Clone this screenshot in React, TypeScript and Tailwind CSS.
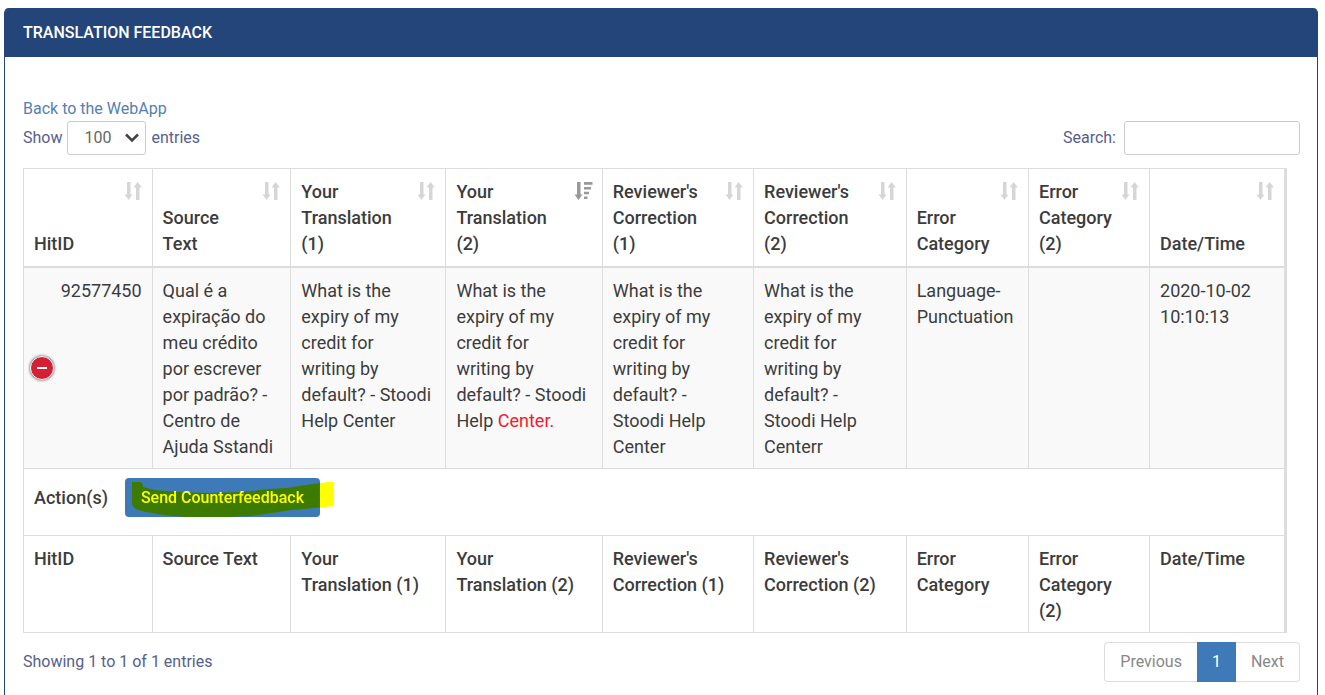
import { useState } from "react";

type SortState = "none" | "desc";

interface Column {
  head: string;
  foot: string;
  width: string;
  sort: SortState;
}

const columns: Column[] = [
  { head: "HitID", foot: "HitID", width: "w-[10.2%]", sort: "none" },
  { head: "Source\nText", foot: "Source Text", width: "w-[11%]", sort: "none" },
  { head: "Your\nTranslation\n(1)", foot: "Your\nTranslation (1)", width: "w-[12.3%]", sort: "none" },
  { head: "Your\nTranslation\n(2)", foot: "Your\nTranslation (2)", width: "w-[12.4%]", sort: "desc" },
  { head: "Reviewer's\nCorrection\n(1)", foot: "Reviewer's\nCorrection (1)", width: "w-[12%]", sort: "none" },
  { head: "Reviewer's\nCorrection\n(2)", foot: "Reviewer's\nCorrection (2)", width: "w-[12.1%]", sort: "none" },
  { head: "Error\nCategory", foot: "Error\nCategory", width: "w-[9.7%]", sort: "none" },
  { head: "Error\nCategory\n(2)", foot: "Error\nCategory\n(2)", width: "w-[9.6%]", sort: "none" },
  { head: "Date/Time", foot: "Date/Time", width: "w-[10.7%]", sort: "none" },
];

const cell = "border-r border-b border-[#ddd] px-[10px] whitespace-pre-line";
const dataCell = cell + " pt-[10px] pb-2";

function SortIcon({ state }: { state: SortState }) {
  if (state === "desc") {
    return (
      <svg width="20" height="20" viewBox="0 0 20 20" fill="#999" aria-hidden="true">
        <path d="M4 1h3.500v12.500h2L5.500 19l-4-5.500H4z" />
        <path d="M11 1h8.500v2.800H11zM11 6h7v2.500h-7zM11 10.800h5v2.500h-5zM11 15.500h3.500V18H11z" />
      </svg>
    );
  }
  return (
    <svg width="20" height="20" viewBox="0 0 20 20" fill="#d6d6d6" aria-hidden="true">
      <path d="M4 1h3.500v12.500h2L5.500 19l-4-5.500H4zM13 19V6.500h-2.500L14.500 1 19 6.500h-2.500V19z" />
    </svg>
  );
}

function Highlight() {
  return (
    <svg
      className="pointer-events-none absolute top-1 left-[7px] mix-blend-multiply"
      width="203"
      height="36"
      viewBox="0 0 203 36"
      aria-hidden="true"
    >
      <path
        d="M0 0h8q3 1 3 5l12 3 24 2 30 1 35-1 24-3 18-1 20-3 22-3h6v24l-8 1-12 1-22 2-20 3-22 3-22 1H54l-22-2-18-3-8-2q-6-2-6-7z"
        fill="#ff0"
      />
    </svg>
  );
}

export default function App() {
  const [open, setOpen] = useState(true);
  return (
    <main className="flex min-h-screen flex-col bg-white pt-2 pr-[7px] pl-1 font-['Roboto',sans-serif] text-base text-[#57608c]">
      <section className="flex-1 rounded-t-[5px] border-x border-[#24457a]">
        <header className="flex h-[49px] items-center rounded-t-[4px] bg-[#24457a] px-[18px]">
          <h1 className="text-base font-medium text-white">TRANSLATION FEEDBACK</h1>
        </header>

        <div className="pt-10 pr-[17px] pl-[18px]">
          <a href="#webapp" className="block leading-6 text-[#5580b0]">
            Back to the WebApp
          </a>

          <div className="flex items-center justify-between">
            <label className="flex items-center gap-[5px]">
              Show
              <span className="relative">
                <select
                  defaultValue="100"
                  className="h-[34px] w-[79px] appearance-none rounded-[3px] border border-[#ccc] bg-white pl-4 text-base text-[#666]"
                >
                  <option>10</option>
                  <option>25</option>
                  <option>50</option>
                  <option>100</option>
                </select>
                <svg
                  className="pointer-events-none absolute top-3 right-[7px]"
                  width="14"
                  height="10"
                  viewBox="0 0 14 10"
                  fill="none"
                  stroke="#444"
                  strokeWidth="2.6"
                  aria-hidden="true"
                >
                  <path d="M1 1.500 7 7.500l6-6" />
                </svg>
              </span>
              entries
            </label>
            <label className="flex items-center gap-2">
              Search:
              <input
                type="search"
                className="h-[34px] w-44 rounded-[3px] border border-[#ccc] bg-white px-3 text-[#555]"
              />
            </label>
          </div>

          <div className="pt-[13px] pr-[13px]">
            <table className="w-full table-fixed border-separate border-spacing-0 border-t border-r-2 border-l border-[#ddd] text-lg leading-[26px] text-[#3c3c3c]">
              <colgroup>
                {columns.map((c) => (
                  <col key={c.foot} className={c.width} />
                ))}
              </colgroup>
              <thead>
                <tr>
                  {columns.map((c) => (
                    <th
                      key={c.foot}
                      scope="col"
                      className="relative border-r border-b-2 border-[#ddd] pt-[10px] pr-8 pb-[9px] pl-[10px] text-left align-bottom font-medium whitespace-pre-line"
                    >
                      {c.head}
                      <button
                        type="button"
                        aria-label={"Sort by " + c.foot}
                        className="absolute top-3 right-[9px]"
                      >
                        <SortIcon state={c.sort} />
                      </button>
                    </th>
                  ))}
                </tr>
              </thead>
              <tbody>
                <tr className="bg-[#f9f9f9] align-top">
                  <td className={dataCell + " relative text-right"}>
                    92577450
                    <button
                      type="button"
                      aria-label="Toggle row details"
                      aria-expanded={open}
                      onClick={() => setOpen(!open)}
                      className="absolute top-1/2 left-[6px] flex size-6 -translate-y-1/2 items-center justify-center rounded-full border border-white bg-[#d32035] shadow-[0_0_3px_#444]"
                    >
                      <span className="h-[2px] w-[10px] bg-white" />
                    </button>
                  </td>
                  <td className={dataCell}>
                    {"Qual é a\nexpiração do\nmeu crédito\npor escrever\npor padrão? -\nCentro de\nAjuda Sstandi"}
                  </td>
                  <td className={dataCell}>
                    {"What is the\nexpiry of my\ncredit for\nwriting by\ndefault? - Stoodi\nHelp Center"}
                  </td>
                  <td className={dataCell}>
                    <div>{"What is the\nexpiry of my\ncredit for\nwriting by\ndefault? - Stoodi"}</div>
                    <div>
                      Help <span className="text-[#f5192b]">Center.</span>
                    </div>
                  </td>
                  <td className={dataCell}>
                    {"What is the\nexpiry of my\ncredit for\nwriting by\ndefault? -\nStoodi Help\nCenter"}
                  </td>
                  <td className={dataCell}>
                    {"What is the\nexpiry of my\ncredit for\nwriting by\ndefault? -\nStoodi Help\nCenterr"}
                  </td>
                  <td className={dataCell}>Language-Punctuation</td>
                  <td className={dataCell} />
                  <td className={dataCell}>2020-10-02 10:10:13</td>
                </tr>
                {open && (
                  <tr>
                    <td colSpan={9} className={cell + " pt-[9px] pb-[18px]"}>
                      <div className="flex items-center gap-[17px]">
                        <span className="font-medium">Action(s)</span>
                        <span className="relative isolate">
                          <button
                            type="button"
                            className="block h-[39px] w-[195px] rounded-[4px] bg-[#3d7ab7] text-base font-medium text-white"
                          >
                            Send Counterfeedback
                          </button>
                          <Highlight />
                        </span>
                      </div>
                    </td>
                  </tr>
                )}
              </tbody>
              <tfoot>
                <tr>
                  {columns.map((c) => (
                    <th
                      key={c.foot}
                      scope="col"
                      className={dataCell + " text-left align-top font-medium"}
                    >
                      {c.foot}
                    </th>
                  ))}
                </tr>
              </tfoot>
            </table>
          </div>

          <div className="flex items-center justify-between pt-[9px]">
            <p>Showing 1 to 1 of 1 entries</p>
            <nav aria-label="Pagination" className="flex h-10 text-[#888]">
              <button type="button" className="rounded-l-[4px] border border-r-0 border-[#ddd] px-[15px]">
                Previous
              </button>
              <button type="button" aria-current="page" className="w-[39px] bg-[#3d7ab7] text-white">
                1
              </button>
              <button type="button" className="rounded-r-[4px] border border-l-0 border-[#ddd] px-[15px]">
                Next
              </button>
            </nav>
          </div>
        </div>
      </section>
    </main>
  );
}
